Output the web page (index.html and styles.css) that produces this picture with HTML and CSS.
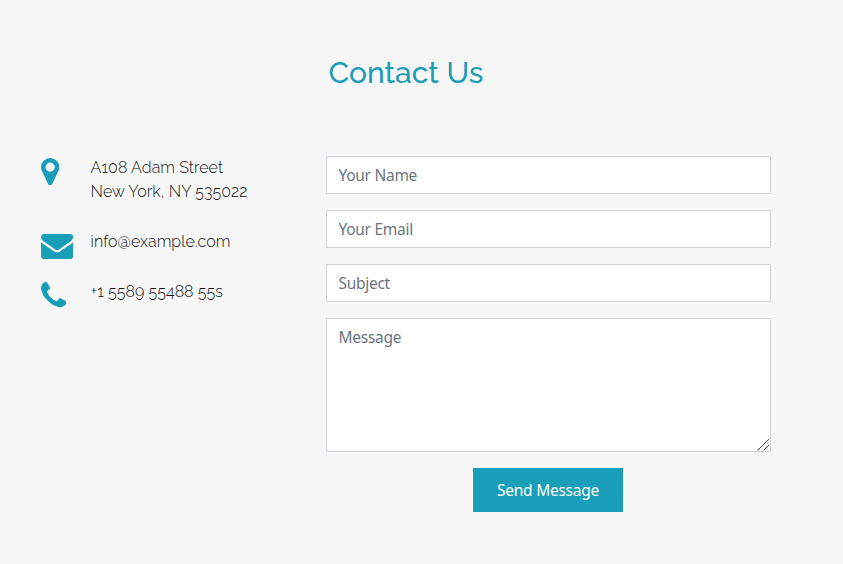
FILE: index.html
```html
<!DOCTYPE html>
<html lang="en">
<head>
<meta charset="utf-8">
<title>Contact Us</title>
<link rel="stylesheet" href="styles.css">
</head>
<body>
<section class="contact">
  <h2 class="title">Contact Us</h2>
  <div class="columns">
    <address class="info">
      <div class="info-row">
        <span class="icon"><svg class="marker" viewBox="384 128 1024 1536"><path d="M1152 640q0-106-75-181t-181-75-181 75-75 181 75 181 181 75 181-75 75-181zm256 0q0 109-33 179l-364 774q-16 33-47.5 52t-67.5 19-67.5-19-46.5-52l-365-774q-33-70-33-179 0-212 150-362t362-150 362 150 150 362z"/></svg></span>
        <p>A108 Adam Street<br>New York, NY 535022</p>
      </div>
      <div class="info-row">
        <span class="icon"><svg class="envelope" viewBox="0 256 1792 1408"><path d="M1792 710v794q0 66-47 113t-113 47h-1472q-66 0-113-47t-47-113v-794q44 49 101 87 362 246 497 345 57 42 92.5 65.5t94.5 48 110 24.5h2q51 0 110-24.5t94.5-48 92.5-65.5q170-123 498-345 57-39 100-87zm0-294q0 79-49 151t-122 123q-376 261-468 325-10 7-42.5 31t-54 38.5-52 32.5-57.5 27-50 9h-2q-23 0-50-9t-57.5-27-52-32.5-54-38.5-42.5-31q-91-64-262-182.5t-205-142.5q-62-42-117-115.5t-55-136.5q0-78 41.5-130t118.5-52h1472q65 0 112.5 47t47.5 113z"/></svg></span>
        <p>info@example.com</p>
      </div>
      <div class="info-row">
        <span class="icon"><svg class="phone-icon" viewBox="192 128 1408 1408"><path d="M1600 1240q0 27-10 70.5t-21 68.5q-21 50-122 106-94 51-186 51-27 0-53-3.5t-57.5-12.5-47-14.5-55.5-20.5-49-18q-98-35-175-83-127-79-264-216t-216-264q-48-77-83-175-3-9-18-49t-20.5-55.5-14.5-47-12.5-57.5-3.5-53q0-92 51-186 56-101 106-122 25-11 68.5-21t70.5-10q14 0 21 3 18 6 53 76 11 19 30 54t35 63.5 31 53.5q3 4 17.5 25t21.5 35.5 7 28.5q0 20-28.5 50t-62 55-62 53-28.5 46q0 9 5 22.5t8.5 20.5 14 24 11.5 19q76 137 174 235t235 174q2 1 19 11.5t24 14 20.5 8.5 22.5 5q18 0 46-28.5t53-62 55-62 50-28.5q14 0 28.5 7t35.5 21.5 25 17.5q25 15 53.5 31t63.5 35 54 30q70 35 76 53 3 7 3 21z"/></svg></span>
        <p>+1 5589 55488 55s</p>
      </div>
    </address>
    <form class="form">
      <input class="field" type="text" placeholder="Your Name">
      <input class="field" type="email" placeholder="Your Email">
      <input class="field" type="text" placeholder="Subject">
      <div class="message-wrap">
        <textarea class="field message" placeholder="Message"></textarea>
        <svg class="grip" viewBox="0 0 13 13"><path d="M0.5 12.5L12 1M6.5 12.5L12 7"/></svg>
      </div>
      <button class="send" type="button">Send Message</button>
    </form>
  </div>
</section>
</body>
</html>
```
FILE: styles.css
```css
* { box-sizing: border-box; }
body {
  margin: 0;
  background: #f7f7f7;
  font-family: Raleway, Lato, sans-serif;
  font-variant-numeric: oldstyle-nums;
}
.contact { height: 564px; padding: 55px 72px 0 40px; }
.title {
  margin: 0 0 65px;
  padding-left: 288.5px;
  font-size: 30px;
  line-height: 36px;
  font-weight: 500;
  color: #1b9db7;
}
.columns { display: flex; }
.info { width: 286px; font-style: normal; }
.info-row { display: flex; margin-bottom: 26px; }
.icon { width: 50.6px; height: 24px; }
.icon svg { display: block; fill: #189eb8; }
.marker { width: 18.3px; height: 27.4px; margin: 2px 0 0 0.6px; }
.envelope { width: 32.2px; height: 25.2px; margin: 4px 0 0 0.6px; }
.phone-icon { width: 25.2px; height: 25.2px; margin: 2px 0 0 0.6px; }
.info p {
  margin: 0;
  font-size: 16px;
  line-height: 24px;
  font-weight: 300;
  letter-spacing: 0.07px;
  color: #111;
  white-space: nowrap;
}
.form { width: 445px; display: flex; flex-direction: column; gap: 16px; }
.field {
  display: block;
  width: 100%;
  height: 38px;
  margin: 0;
  padding: 6px 11.5px;
  border: 1px solid #ced4da;
  border-radius: 0;
  background: #fff;
  font: 15.5px/24px "Segoe UI", "Noto Sans", sans-serif;
  letter-spacing: -0.28px;
  color: #495057;
}
.field::placeholder { color: #6c757d; opacity: 1; }
.message-wrap { position: relative; }
.message { height: 134px; resize: none; }
.grip {
  position: absolute;
  right: 1px;
  bottom: 1px;
  width: 13px;
  height: 13px;
  fill: none;
  stroke: #555;
  stroke-width: 1;
}
.send {
  align-self: center;
  width: 150px;
  height: 44px;
  margin-right: 1px;
  padding: 0;
  border: 0;
  background: #189eb8;
  color: #fff;
  font: 15.5px/24px "Segoe UI", "Noto Sans", sans-serif;
  letter-spacing: -0.26px;
}
```
